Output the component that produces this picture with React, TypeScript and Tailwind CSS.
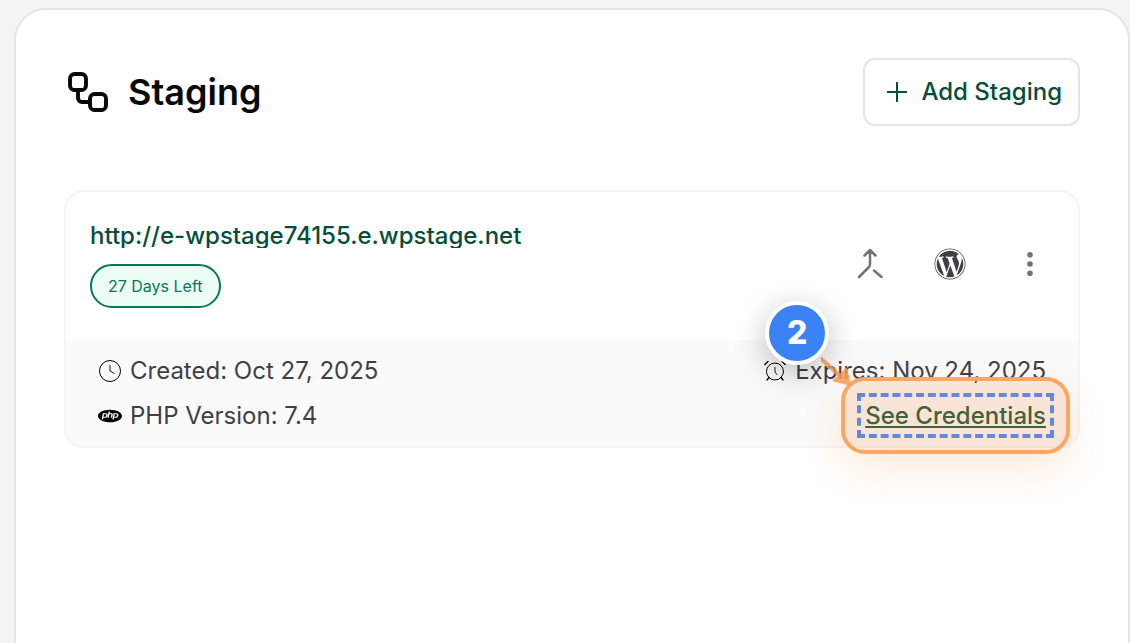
import { Plus } from 'lucide-react'
import { FaWordpress } from 'react-icons/fa'
import { SiPhp } from 'react-icons/si'

const staging = {
  url: 'http://e-wpstage74155.e.wpstage.net',
  badge: '27 Days Left',
  created: 'Oct 27, 2025',
  expires: 'Nov 24, 2025',
  php: '7.4',
}

function StagingIcon() {
  return (
    <svg className="size-12" viewBox="0 0 48 48" fill="none" stroke="currentColor" strokeWidth="3.9" aria-hidden="true">
      <rect x="6" y="6" width="16" height="16" rx="4.5" />
      <rect x="26" y="26" width="16" height="16" rx="4.5" />
      <path d="M14 22v8a4 4 0 0 0 4 4h8" />
    </svg>
  )
}

function MergeIcon() {
  return (
    <svg className="size-8" viewBox="0 0 32 32" fill="none" stroke="currentColor" strokeWidth="2.5" strokeLinecap="round" strokeLinejoin="round" aria-hidden="true">
      <path d="M10.500 7.500 16 2l5.500 5.500M16 2v14q0 2-1.500 3.500L5 29M20 22.500l7.500 6.500" />
    </svg>
  )
}

function DotsIcon() {
  return (
    <svg className="size-8" viewBox="0 0 32 32" fill="currentColor" aria-hidden="true">
      <circle cx="16" cy="6.7" r="2.8" />
      <circle cx="16" cy="16" r="2.8" />
      <circle cx="16" cy="25.3" r="2.8" />
    </svg>
  )
}

function ClockIcon() {
  return (
    <svg className="size-6 text-black" viewBox="0 0 24 24" fill="none" stroke="currentColor" aria-hidden="true">
      <circle cx="12" cy="12" r="10.5" />
      <path d="M12 6v6l4.500 2.500" strokeWidth="0.9" />
    </svg>
  )
}

function AlarmIcon() {
  return (
    <svg className="size-6 text-black" viewBox="0 0 24 24" fill="none" stroke="currentColor" strokeLinecap="round" aria-hidden="true">
      <circle cx="12" cy="12.5" r="8.5" />
      <path d="M12 8.500v4.500l2 2.500" strokeWidth="0.9" />
      <path d="M1.800 5.500 5 2.500M22.200 5.500 19 2.500M6 18.500l-2 2.500M18 18.500l2 2.500" strokeWidth="1.3" />
    </svg>
  )
}

function StepMarker() {
  return (
    <span className="pointer-events-none absolute -inset-6 rounded-3xl border-4 border-[#ffa562] bg-[#f97316]/15 shadow-[0_16px_40px_rgba(249,115,22,0.15)]">
      <svg className="absolute -top-6 -left-6 size-9 text-[#fb9a52]/85" viewBox="0 0 36 36" aria-hidden="true">
        <path d="M-1 1 18 18" stroke="currentColor" strokeWidth="4" fill="none" />
        <path d="M30 29 26 10 11 24z" fill="currentColor" />
      </svg>
      <span className="absolute -top-20 -left-20 flex size-16 items-center justify-center rounded-full border-4 border-white bg-[#3b82f6] text-[32px] leading-8 font-extrabold text-white shadow-[0_8px_32px_rgba(0,0,0,0.25)]">
        2
      </span>
    </span>
  )
}

export default function App() {
  return (
    <main className="flex min-h-screen bg-[#f4f4f4] pt-2 pl-[14px] font-['Inter',sans-serif]">
      <section className="min-w-0 flex-1 rounded-t-[32px] border-2 border-b-0 border-[#e4e4e5] bg-white p-12">
        <header className="flex items-center justify-between">
          <div className="flex items-center gap-4 text-zinc-950">
            <StagingIcon />
            <h1 className="text-4xl font-semibold">Staging</h1>
          </div>
          <button className="flex items-center gap-2 rounded-xl border-2 border-[#e4e4e5] p-4 text-2xl font-medium text-[#064e3b]">
            <Plus className="size-8" strokeWidth={1.5} />
            Add Staging
          </button>
        </header>

        <article className="mt-16 rounded-[20px] border-2 border-zinc-100">
          <div className="flex items-start justify-between px-6 py-8">
            <div className="min-w-0">
              <a href="#" className="block truncate text-2xl leading-6 font-medium text-[#064e3b]">
                {staging.url}
              </a>
              <span className="mt-4 inline-flex h-11 items-center rounded-full border-2 border-[#047857] bg-[#ecfdf5] px-4 text-base text-[#047857]">
                {staging.badge}
              </span>
            </div>
            <div className="flex gap-8 text-zinc-500">
              <button aria-label="Merge" className="flex h-20 w-12 items-center justify-center">
                <MergeIcon />
              </button>
              <button aria-label="WordPress" className="flex h-20 w-12 items-center justify-center text-zinc-700">
                <FaWordpress className="size-8" />
              </button>
              <button aria-label="More" className="flex h-20 w-12 items-center justify-center">
                <DotsIcon />
              </button>
            </div>
          </div>

          <div className="flex flex-col gap-4 rounded-b-[18px] bg-[#fafafa] px-8 py-4 text-2xl leading-[29px] text-zinc-700">
            <div className="flex items-center justify-between">
              <p className="flex items-center gap-2">
                <ClockIcon />
                Created: {staging.created}
              </p>
              <p className="flex items-center gap-2">
                <AlarmIcon />
                Expires: {staging.expires}
              </p>
            </div>
            <div className="flex items-center justify-between">
              <p className="flex items-center gap-2">
                <SiPhp className="size-6 text-black" />
                PHP Version: {staging.php}
              </p>
              <div className="relative">
                <a href="#" className="block font-medium text-[#25603f] underline">
                  See Credentials
                </a>
                <span className="pointer-events-none absolute -inset-2 border-4 border-dashed border-[#4c8dfa]" />
                <StepMarker />
              </div>
            </div>
          </div>
        </article>
      </section>
    </main>
  )
}
